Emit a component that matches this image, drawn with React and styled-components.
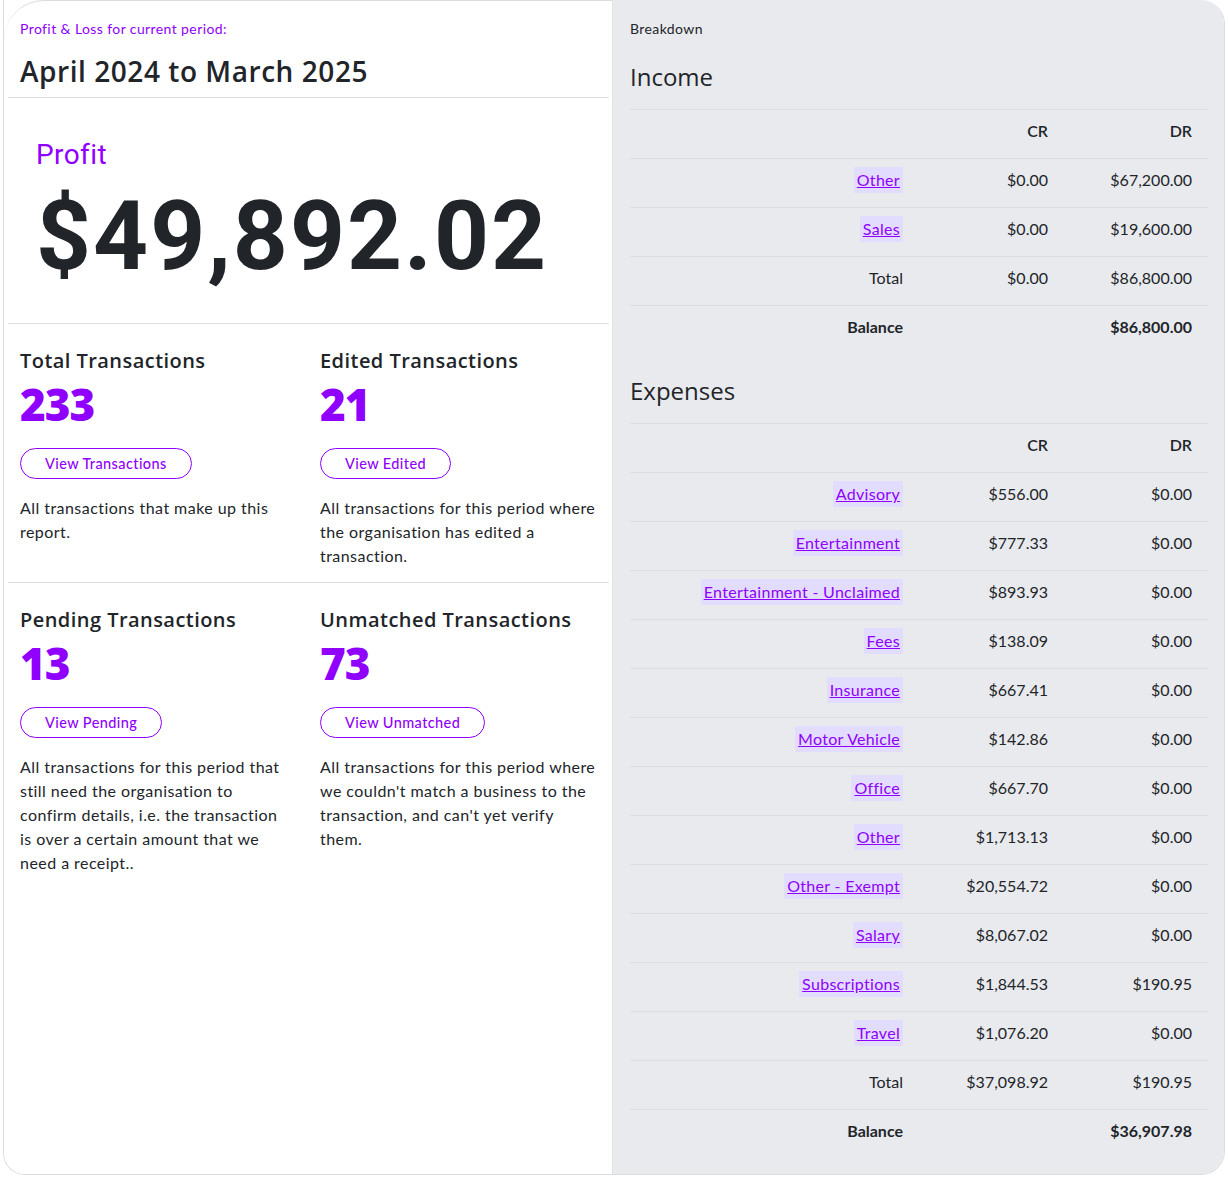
import React from "react";
import styled, { createGlobalStyle } from "styled-components";

const purple = "#8f00ff";
const ink = "#212529";

const GlobalStyle = createGlobalStyle`
  *, *::before, *::after { box-sizing: border-box; }
  body {
    margin: 0;
    background: #fff;
    font-family: "Lato", "Noto Sans", sans-serif;
    color: ${ink};
  }
`;

const income = [
  { name: "Other", cr: "$0.00", dr: "$67,200.00" },
  { name: "Sales", cr: "$0.00", dr: "$19,600.00" },
];

const expenses = [
  { name: "Advisory", cr: "$556.00", dr: "$0.00" },
  { name: "Entertainment", cr: "$777.33", dr: "$0.00" },
  { name: "Entertainment - Unclaimed", cr: "$893.93", dr: "$0.00" },
  { name: "Fees", cr: "$138.09", dr: "$0.00" },
  { name: "Insurance", cr: "$667.41", dr: "$0.00" },
  { name: "Motor Vehicle", cr: "$142.86", dr: "$0.00" },
  { name: "Office", cr: "$667.70", dr: "$0.00" },
  { name: "Other", cr: "$1,713.13", dr: "$0.00" },
  { name: "Other - Exempt", cr: "$20,554.72", dr: "$0.00" },
  { name: "Salary", cr: "$8,067.02", dr: "$0.00" },
  { name: "Subscriptions", cr: "$1,844.53", dr: "$190.95" },
  { name: "Travel", cr: "$1,076.20", dr: "$0.00" },
];

const stats = [
  [
    {
      title: "Total Transactions",
      count: 233,
      button: "View Transactions",
      text: "All transactions that make up this report.",
    },
    {
      title: "Edited Transactions",
      count: 21,
      button: "View Edited",
      text: "All transactions for this period where the organisation has edited a transaction.",
    },
  ],
  [
    {
      title: "Pending Transactions",
      count: 13,
      button: "View Pending",
      text: "All transactions for this period that still need the organisation to confirm details, i.e. the transaction is over a certain amount that we need a receipt..",
    },
    {
      title: "Unmatched Transactions",
      count: 73,
      button: "View Unmatched",
      text: "All transactions for this period where we couldn't match a business to the transaction, and can't yet verify them.",
    },
  ],
];

const Section = ({ title, rows, total, balance }) => (
  <>
    <SectionTitle>{title}</SectionTitle>
    <Table>
      <Row>
        <Cell />
        <Cell $head>CR</Cell>
        <Cell $head>DR</Cell>
      </Row>
      {rows.map((r) => (
        <Row key={r.name}>
          <Cell>
            <Account href="#">{r.name}</Account>
          </Cell>
          <Cell>{r.cr}</Cell>
          <Cell>{r.dr}</Cell>
        </Row>
      ))}
      <Row>
        <Cell>Total</Cell>
        <Cell>{total.cr}</Cell>
        <Cell>{total.dr}</Cell>
      </Row>
      <Row>
        <Cell $bold>Balance</Cell>
        <Cell />
        <Cell $bold>{balance}</Cell>
      </Row>
    </Table>
  </>
);

const App = () => {
  return (
    <>
      <GlobalStyle />
      <Card>
        <Left>
          <Header>
            <Eyebrow>Profit &amp; Loss for current period:</Eyebrow>
            <Period>April 2024 to March 2025</Period>
          </Header>
          <ProfitBlock>
            <ProfitLabel>Profit</ProfitLabel>
            <ProfitValue>$49,892.02</ProfitValue>
          </ProfitBlock>
          {stats.map((pair, i) => (
            <StatRow key={i} $last={i === stats.length - 1}>
              {pair.map((s) => (
                <Stat key={s.title}>
                  <StatTitle>{s.title}</StatTitle>
                  <StatCount>{s.count}</StatCount>
                  <PillButton>{s.button}</PillButton>
                  <StatText>{s.text}</StatText>
                </Stat>
              ))}
            </StatRow>
          ))}
        </Left>
        <Right>
          <Eyebrow $plain>Breakdown</Eyebrow>
          <Section
            title="Income"
            rows={income}
            total={{ cr: "$0.00", dr: "$86,800.00" }}
            balance="$86,800.00"
          />
          <Section
            title="Expenses"
            rows={expenses}
            total={{ cr: "$37,098.92", dr: "$190.95" }}
            balance="$36,907.98"
          />
        </Right>
      </Card>
    </>
  );
};

const Card = styled.div`
  margin: 0 3px;
  width: 1222px;
  height: 1175px;
  border: 1px solid #dcdcdc;
  border-top: none;
  border-radius: 0 24px 24px 22px;
  overflow: hidden;
  display: grid;
  grid-template-columns: 609px 1fr;
`;

const Left = styled.div`
  background: #fff;
  padding: 0 3px 0 4px;
  border-right: 1px solid #e2e2e2;
  border-top-left-radius: 40px;
  border-top: 1px solid #dcdcdc;
`;

const Header = styled.div`
  padding: 18px 12px 8px;
  border-bottom: 1px solid #dee0e4;
`;

const Eyebrow = styled.div`
  font-family: "Lato", sans-serif;
  font-size: 14px;
  line-height: 20px;
  letter-spacing: 0.4px;
  color: ${(p) => (p.$plain ? ink : purple)};
`;

const Period = styled.h1`
  margin: 14px 0 0;
  font-family: "Open Sans", sans-serif;
  font-weight: 600;
  font-size: 28px;
  line-height: 36px;
  letter-spacing: 0.55px;
`;

const ProfitBlock = styled.div`
  padding: 40px 28px 32px;
  border-bottom: 1px solid #dee0e4;
`;

const ProfitLabel = styled.div`
  font-family: "Roboto", sans-serif;
  font-size: 28px;
  line-height: 34px;
  letter-spacing: 0.4px;
  color: ${purple};
`;

const ProfitValue = styled.div`
  margin-top: 9px;
  font-family: "Roboto", sans-serif;
  font-weight: 700;
  font-size: 96px;
  line-height: 110px;
  letter-spacing: 2px;
`;

const StatRow = styled.div`
  display: grid;
  grid-template-columns: 270px 277px;
  column-gap: 30px;
  padding: 23px 12px ${(p) => (p.$last ? "0" : "14px")};
  border-bottom: ${(p) => (p.$last ? "none" : "1px solid #dee0e4")};
`;

const Stat = styled.div`
  display: flex;
  flex-direction: column;
  align-items: flex-start;
`;

const StatTitle = styled.div`
  font-family: "Open Sans", sans-serif;
  font-weight: 600;
  font-size: 20px;
  line-height: 28px;
  letter-spacing: 0.45px;
  white-space: nowrap;
`;

const StatCount = styled.div`
  margin-top: 4px;
  font-family: "Open Sans", sans-serif;
  font-weight: 800;
  font-size: 44px;
  line-height: 50px;
  color: ${purple};
  letter-spacing: -1px;
`;

const PillButton = styled.button`
  margin-top: 19px;
  height: 31px;
  padding: 0 24px;
  border: 1px solid ${purple};
  border-radius: 16px;
  background: #fff;
  color: ${purple};
  font-family: "Lato", sans-serif;
  font-weight: 500;
  font-size: 14.5px;
  letter-spacing: 0.4px;
  cursor: pointer;
`;

const StatText = styled.p`
  margin: 17px 0 0;
  font-size: 16px;
  line-height: 24px;
  letter-spacing: 0.45px;
`;

const Right = styled.div`
  background: #e9eaee;
  padding: 19px 17px 0 17px;
  border-top-right-radius: 24px;
`;

const SectionTitle = styled.h2`
  margin: 23px 0 17px;
  font-family: "Open Sans", sans-serif;
  font-weight: 500;
  font-size: 24px;
  line-height: 30px;

  & + div + & {
    margin-top: 22px;
  }
`;

const Table = styled.div`
  display: flex;
  flex-direction: column;
`;

const Row = styled.div`
  display: grid;
  grid-template-columns: 289px 145px 144px;
  height: 49px;
  padding-bottom: 7px;
  border-top: 1px solid #dcdde2;
  align-items: center;
`;

const Cell = styled.div`
  text-align: right;
  padding-right: 16px;
  font-size: 16px;
  font-weight: ${(p) => (p.$bold ? 700 : p.$head ? 600 : 400)};
`;

const Account = styled.a`
  display: inline-block;
  padding: 3px 3px;
  line-height: 20px;
  background: #e2dcff;
  color: ${purple};
  text-decoration: underline;
  letter-spacing: 0.3px;
`;

export default App;
